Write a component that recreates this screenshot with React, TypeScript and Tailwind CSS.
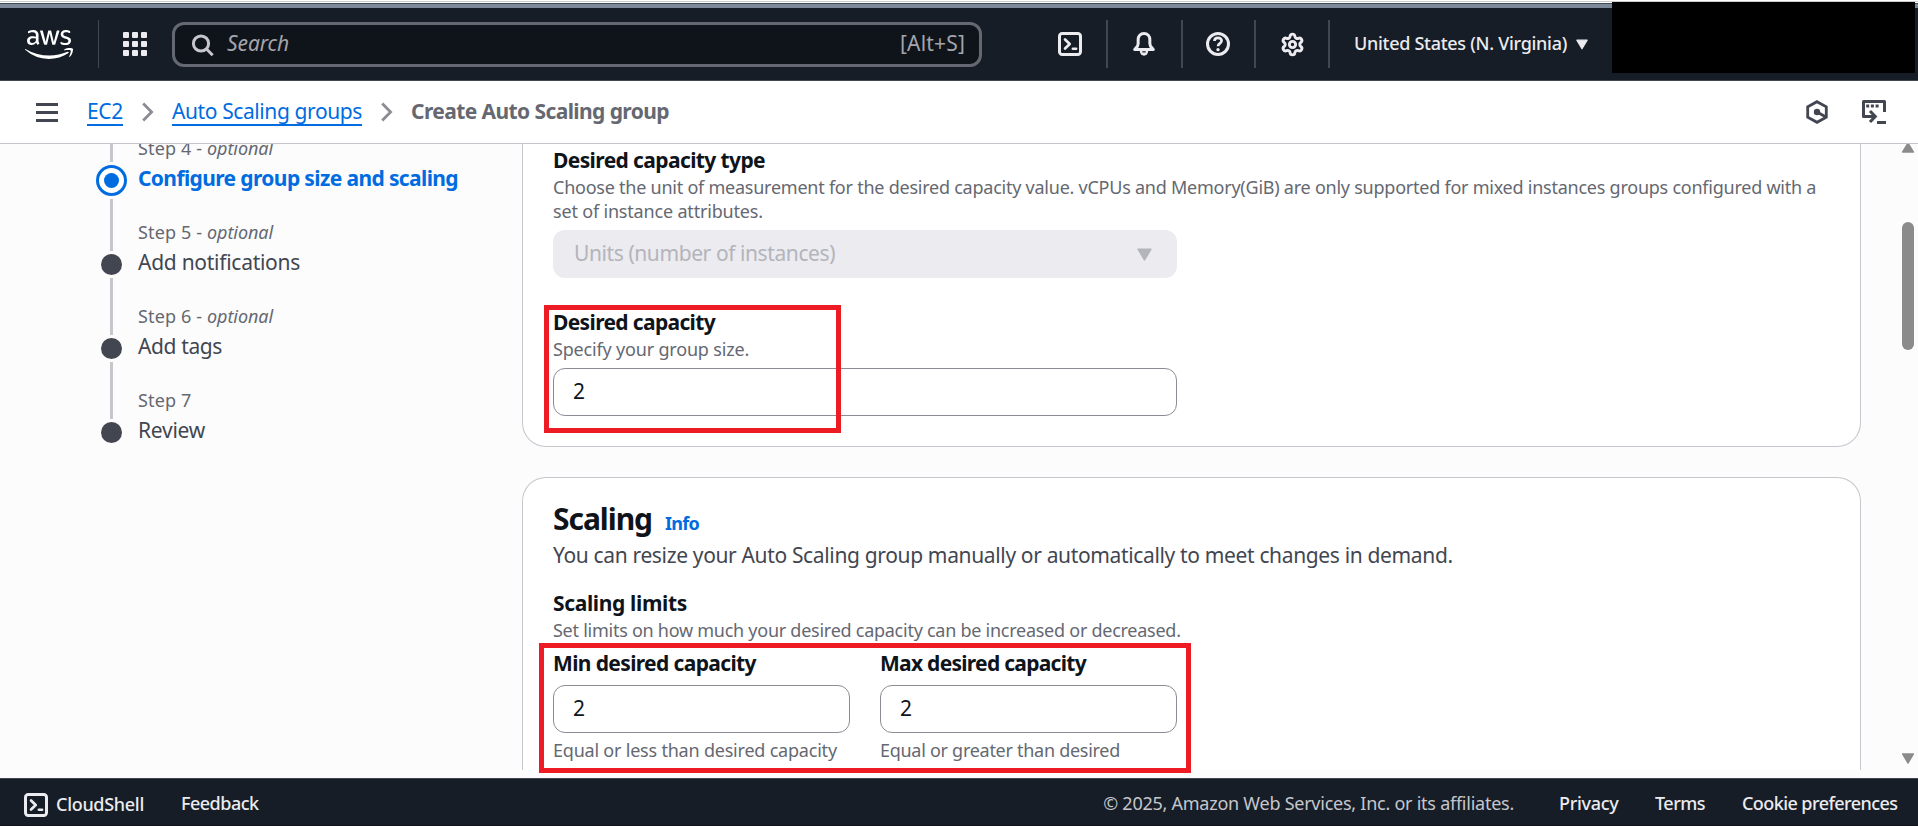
import type { ReactNode } from 'react';
import { FaAws } from 'react-icons/fa';
import { Settings } from 'lucide-react';

function ShellIcon() {
  return (
    <svg className="size-6 shrink-0" viewBox="0 0 16 16" fill="none" stroke="currentColor">
      <rect x="1" y="1" width="14" height="14" rx="1.8" strokeWidth="2" />
      <path d="M4.7 5l3.1 3-3.1 3" strokeWidth="1.8" strokeLinecap="round" strokeLinejoin="round" />
      <path d="M9.9 11.2h2.2" strokeWidth="1.7" strokeLinecap="round" />
    </svg>
  );
}

function BellIcon() {
  return (
    <svg className="size-6 shrink-0" viewBox="0 0 16 16" fill="none" stroke="currentColor" strokeWidth="2" strokeLinejoin="round">
      <path d="M8 1C5.6 1 4.1 2.8 4.1 5v2.6c0 1.6-.7 2.4-1.6 3.2-.3.3-.6.6-.7.9h12.4c-.1-.3-.4-.6-.7-.9-.9-.8-1.6-1.6-1.6-3.2V5C11.9 2.8 10.4 1 8 1z" />
      <path d="M5.2 12.6a2.8 3.2 0 0 0 5.6 0z" fill="currentColor" stroke="none" />
      <path d="M7.2 13.2h1.6" stroke="#161d26" strokeWidth=".9" strokeLinecap="round" />
    </svg>
  );
}

function HelpIcon() {
  return (
    <svg className="size-6 shrink-0" viewBox="0 0 16 16" fill="none" stroke="currentColor">
      <circle cx="8" cy="8" r="7" strokeWidth="2" />
      <path d="M5.6 6c.1-1.4 1.1-2.1 2.4-2.1s2.4.8 2.4 2c0 1.7-2.3 1.7-2.4 3.6" strokeWidth="1.8" />
      <circle cx="8" cy="11.8" r="1.1" fill="currentColor" stroke="none" />
    </svg>
  );
}

function Caret({ className }: { className: string }) {
  return (
    <svg className={className} viewBox="0 0 14 12" fill="currentColor" stroke="currentColor" strokeWidth="1.4" strokeLinejoin="round">
      <path d="M1 1h12L7 11z" />
    </svg>
  );
}

function Chevron() {
  return (
    <svg className="h-5 w-3 shrink-0 text-[#8c8c94]" viewBox="0 0 12 20" fill="none" stroke="currentColor" strokeWidth="2.8">
      <path d="M1.2 1.4L9.6 10l-8.4 8.6" />
    </svg>
  );
}

function Divider({ className }: { className: string }) {
  return <div className={`h-12 shrink-0 bg-[#424650] ${className}`} />;
}

function TopNav() {
  return (
    <header className="flex h-[73px] items-center border-b border-[#424650] bg-[#161d26] text-[#ebebf0]">
      <FaAws className="ml-[25px] h-[39px] w-[48px] shrink-0 text-white" />
      <Divider className="ml-[25px] w-px" />
      <div className="ml-6 grid shrink-0 grid-cols-3 gap-[3px]">
        {Array.from({ length: 9 }, (_, i) => (
          <span key={i} className="size-[6px] rounded-[1px] bg-[#ebebf0]" />
        ))}
      </div>
      <div className="mt-px ml-[25px] flex h-[45px] w-[810px] shrink-0 items-center rounded-xl border-[3px] border-[#656871] bg-[#0f141a] pr-[14px] pl-4 text-[21px] text-[#a4a4ad]">
        <svg className="size-6 shrink-0 text-[#c6c6cd]" viewBox="0 0 24 24" fill="none" stroke="currentColor" strokeWidth="3">
          <circle cx="10" cy="10.5" r="7.6" />
          <path d="M15.5 16l6.2 6.2" />
        </svg>
        <span className="ml-3 pb-px tracking-[-0.1px] italic">Search</span>
        <span className="ml-auto pb-px tracking-[0.17px]">[Alt+S]</span>
      </div>
      <div className="ml-[76px]"><ShellIcon /></div>
      <Divider className="ml-6 w-[2px]" />
      <div className="ml-6"><BellIcon /></div>
      <Divider className="ml-[25px] w-[2px]" />
      <div className="ml-[23px]"><HelpIcon /></div>
      <Divider className="ml-6 w-[2px]" />
      <Settings className="ml-6 size-[25px] shrink-0" strokeWidth={2.8} />
      <Divider className="ml-[23px] w-[2px]" />
      <span className="ml-6 shrink-0 pb-px text-[18px] font-medium tracking-[-0.29px] whitespace-nowrap">United States (N. Virginia)</span>
      <Caret className="ml-[9px] h-[11px] w-[12px] shrink-0" />
    </header>
  );
}

function Breadcrumbs() {
  return (
    <nav className="flex h-[63px] items-center border-b border-[#c6c6cd] bg-white text-[21px] text-[#424650]">
      <div className="ml-9 flex w-[22px] shrink-0 flex-col gap-[5px]">
        <span className="h-[3px] bg-current" />
        <span className="h-[3px] bg-current" />
        <span className="h-[3px] bg-current" />
      </div>
      <a className="ml-[29px] w-[36px] shrink-0 tracking-[-0.32px] text-[#006ce0] underline decoration-2 underline-offset-[5px] [text-decoration-skip-ink:none]">EC2</a>
      <div className="ml-[19px] w-[30px] shrink-0"><Chevron /></div>
      <a className="w-[190px] shrink-0 tracking-[-0.4px] whitespace-nowrap text-[#006ce0] underline decoration-2 underline-offset-[5px] [text-decoration-skip-ink:none]">Auto Scaling groups</a>
      <div className="ml-[19px] w-[30px] shrink-0"><Chevron /></div>
      <span className="font-bold tracking-[-0.59px] text-[#656871]">Create Auto Scaling group</span>
      <svg className="ml-auto size-6" viewBox="0 0 24 24" fill="none" stroke="currentColor" strokeWidth="2.8">
        <path d="M12 1.700l9.300 5.200v10.200L12 22.300l-9.300-5.200V6.900z" />
        <circle cx="12" cy="12" r="3.200" fill="currentColor" stroke="none" />
        <path d="M12 12l9 5" />
      </svg>
      <svg className="mr-8 ml-[33px] size-6" viewBox="0 0 24 24" fill="none" stroke="currentColor" strokeWidth="3">
        <path d="M22.500 12V1.500h-21v15H13" strokeLinejoin="round" />
        <path d="M8 11l5.300 5.500L8 22" />
        <path d="M15 22.500h9" />
        <path d="M4.200 6h13" strokeDasharray="3 1.700" strokeWidth="3.200" />
      </svg>
    </nav>
  );
}

type Step = { n: number; title: string; optional: boolean; titleClass: string; active?: boolean };

const steps: Step[] = [
  { n: 4, title: 'Configure group size and scaling', optional: true, active: true, titleClass: 'tracking-[-0.62px] font-bold text-[#006ce0]' },
  { n: 5, title: 'Add notifications', optional: true, titleClass: 'tracking-[-0.27px] text-[#424650]' },
  { n: 6, title: 'Add tags', optional: true, titleClass: 'tracking-[-0.38px] text-[#424650]' },
  { n: 7, title: 'Review', optional: false, titleClass: 'tracking-[-0.25px] text-[#424650]' },
];

function StepRow({ step, last }: { step: Step; last: boolean }) {
  return (
    <li className="flex h-[84px]">
      <div className="flex w-[31px] shrink-0 flex-col items-center">
        <span className={`w-[3px] shrink-0 bg-[#c6c6cd] ${step.active ? 'h-[26px]' : 'h-[31px]'}`} />
        {step.active ? (
          <span className="my-[3px] flex size-[31px] shrink-0 items-center justify-center rounded-full border-[3px] border-[#006ce0] bg-white">
            <span className="size-[15px] rounded-full bg-[#006ce0]" />
          </span>
        ) : (
          <span className="my-[3px] size-[21px] shrink-0 rounded-full bg-[#424650]" />
        )}
        {!last && <span className="w-[3px] grow bg-[#c6c6cd]" />}
      </div>
      <div className="ml-[11px] whitespace-nowrap">
        <div className="text-[18px] leading-6 text-[#656871]">
          <span className="tracking-[0.14px]">Step {step.n}{step.optional && ' - '}</span>
          {step.optional && <span className="tracking-[-0.07px] italic">optional</span>}
        </div>
        <div className={`mt-[3px] text-[21px] leading-[30px] ${step.titleClass}`}>{step.title}</div>
      </div>
    </li>
  );
}

function Label({ className, children }: { className: string; children: ReactNode }) {
  return <div className={`text-[21px] leading-[30px] font-bold text-[#0f141a] ${className}`}>{children}</div>;
}

function Hint({ className, children }: { className: string; children: ReactNode }) {
  return <div className={`text-[18px] leading-6 text-[#656871] ${className}`}>{children}</div>;
}

function NumberField({ value }: { value: string }) {
  return (
    <div className="mt-[7px] flex h-12 items-center rounded-xl border border-[#8c8c94] bg-white pl-[19px] text-[21px] text-[#0f141a]">
      {value}
    </div>
  );
}

function MainPane() {
  return (
    <main className="flex h-[634px] bg-[#fcfcfc] pb-2">
      <div className="flex grow overflow-hidden">
        <ol className="-mt-2 w-[522px] shrink-0 pl-24">
          {steps.map((s, i) => (
            <StepRow key={s.n} step={s} last={i === steps.length - 1} />
          ))}
        </ol>
        <div className="w-[1339px] shrink-0">
          <section className="h-[303px] rounded-b-3xl border border-t-0 border-[#c6c6cd] bg-white pt-px pl-[30px]">
            <Label className="tracking-[-0.61px]">Desired capacity type</Label>
            <Hint className="tracking-[-0.24px] whitespace-nowrap">
              Choose the unit of measurement for the desired capacity value. vCPUs and Memory(GiB) are only supported for mixed instances groups configured with a
              <br />
              <span className="tracking-[-0.18px]">set of instance attributes.</span>
            </Hint>
            <div className="mt-[7px] flex h-12 w-[624px] items-center justify-between rounded-xl bg-[#ebebf0] pr-[25px] pl-[21px] text-[21px] tracking-[-0.41px] text-[#b4b4bb]">
              Units (number of instances)
              <Caret className="h-[13px] w-[15px]" />
            </div>
            <div className="mt-[29px] w-[624px]">
              <Label className="tracking-[-0.65px]">Desired capacity</Label>
              <Hint className="tracking-[-0.18px]">Specify your group size.</Hint>
              <NumberField value="2" />
            </div>
          </section>
          <section className="mt-[30px] h-[400px] rounded-t-3xl border border-b-0 border-[#c6c6cd] bg-white pt-[23px] pl-[30px]">
            <h2 className="flex items-baseline text-[#0f141a]">
              <span className="text-[30px] leading-9 font-bold tracking-[-1.05px]">Scaling</span>
              <a className="ml-[13px] text-[18px] font-bold tracking-[-0.73px] text-[#006ce0]">Info</a>
            </h2>
            <p className="mt-[3px] text-[21px] leading-[30px] tracking-[-0.35px] text-[#424650]">
              You can resize your Auto Scaling group manually or automatically to meet changes in demand.
            </p>
            <Label className="mt-[18px] tracking-[-0.35px]">Scaling limits</Label>
            <Hint className="tracking-[-0.26px]">Set limits on how much your desired capacity can be increased or decreased.</Hint>
            <div className="mt-[6px] grid w-[624px] grid-cols-2 gap-[30px]">
              <div>
                <Label className="tracking-[-0.63px]">Min desired capacity</Label>
                <NumberField value="2" />
                <Hint className="mt-[5px] tracking-[-0.21px]">Equal or less than desired capacity</Hint>
              </div>
              <div>
                <Label className="tracking-[-0.72px]">Max desired capacity</Label>
                <NumberField value="2" />
                <Hint className="mt-[5px] tracking-[-0.28px]">Equal or greater than desired</Hint>
              </div>
            </div>
          </section>
        </div>
      </div>
      <div className="flex w-[20px] shrink-0 flex-col items-center overflow-hidden text-[#8b8b8b]">
        <Caret className="-mt-[2px] h-[11px] w-[14px] shrink-0 rotate-180" />
        <span className="mt-[69px] h-32 w-3 shrink-0 rounded-full bg-current" />
        <Caret className="mt-auto mb-[6px] h-[11px] w-[14px] shrink-0" />
      </div>
    </main>
  );
}

function Footer() {
  return (
    <footer className="flex h-12 items-center border-t border-b border-t-[#424650] border-b-[#0f141a] bg-[#161d26] pt-[3px] pr-[21px] pl-6 text-[18px] whitespace-nowrap text-[#ebebf0]">
      <div className="flex items-center pt-[3px]">
        <ShellIcon />
        <span className="ml-2 w-[125px] pb-[2px] font-medium tracking-[-0.3px]">CloudShell</span>
      </div>
      <span className="font-medium tracking-[-0.52px]">Feedback</span>
      <span className="ml-auto tracking-[-0.25px] text-[#c6c6cd]">© 2025, Amazon Web Services, Inc. or its affiliates.</span>
      <span className="ml-[45px] w-[59px] font-medium tracking-[-0.3px]">Privacy</span>
      <span className="ml-[37px] w-[50px] font-medium tracking-[-0.5px]">Terms</span>
      <span className="ml-[37px] w-[155px] font-medium tracking-[-0.57px]">Cookie preferences</span>
    </footer>
  );
}

export default function App() {
  return (
    <div className="relative h-[826px] w-[1918px] overflow-hidden bg-white font-['Noto_Sans',sans-serif]">
      <div className="flex h-2 flex-col">
        <div className="h-px bg-white" />
        <div className="h-px bg-[#cccccc]" />
        <div className="h-px bg-white" />
        <div className="h-px bg-[#424b59]" />
        <div className="h-1 bg-[#7d8998]" />
      </div>
      <TopNav />
      <Breadcrumbs />
      <MainPane />
      <Footer />
      <div className="absolute top-[2px] left-[1612px] h-[71px] w-[303px] bg-black" />
      <div className="absolute top-[305px] left-[544px] h-[128px] w-[297px] border-[5px] border-[#ed1c24]" />
      <div className="absolute top-[643px] left-[539px] h-[130px] w-[652px] border-[5px] border-[#ed1c24]" />
    </div>
  );
}
